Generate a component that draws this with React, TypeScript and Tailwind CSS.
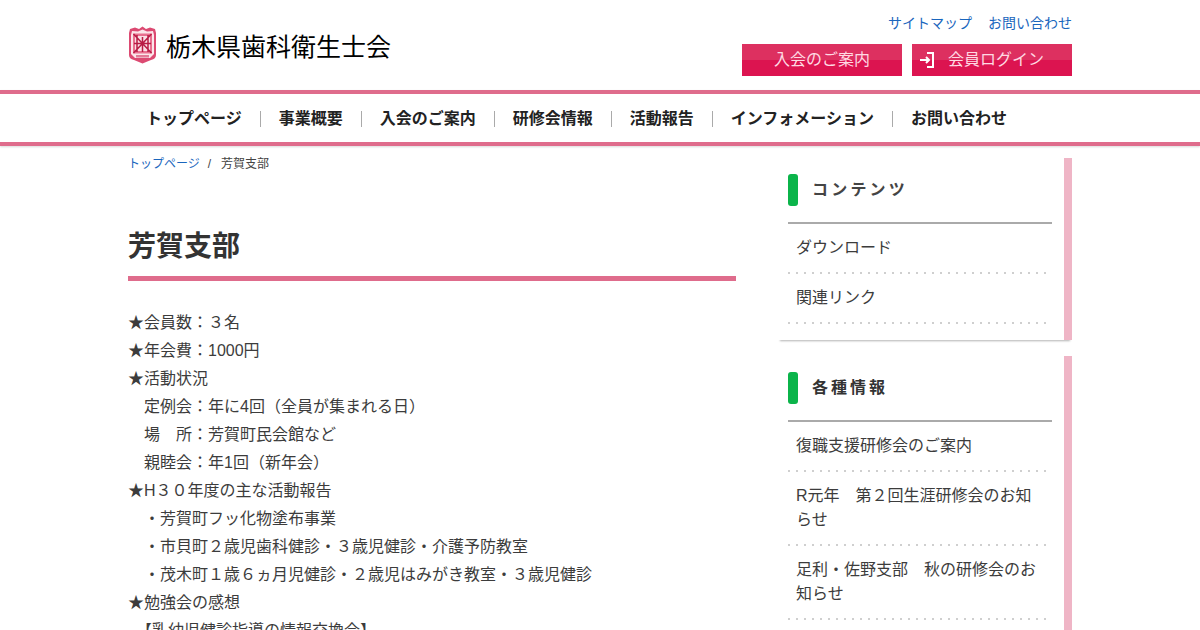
const font = { fontFamily: '"Liberation Sans", "Noto Sans CJK JP", sans-serif' }

const navItems = ['トップページ', '事業概要', '入会のご案内', '研修会情報', '活動報告', 'インフォメーション', 'お問い合わせ']

const bodyLines = [
  '★会員数：３名',
  '★年会費：1000円',
  '★活動状況',
  '　定例会：年に4回（全員が集まれる日）',
  '　場　所：芳賀町民会館など',
  '　親睦会：年1回（新年会）',
  '★H３０年度の主な活動報告',
  '　・芳賀町フッ化物塗布事業',
  '　・市貝町２歳児歯科健診・３歳児健診・介護予防教室',
  '　・茂木町１歳６ヵ月児健診・２歳児はみがき教室・３歳児健診',
  '★勉強会の感想',
  '　【乳幼児健診指導の情報交換会】',
]

const Logo = () => (
  <svg width="29" height="38" viewBox="0 0 29 38">
    <path d="M14.5 0.5 L18 3 L22 1.5 L27 3 L28 7 L28 29 Q28 33 23 34 L14.5 37.5 L6 34 Q1 33 1 29 L1 7 L2 3 L7 1.5 L11 3 Z" fill="#dc4a72" />
    <path d="M14.5 3.5 L19 5.5 L25 5 L26 9 L26 28 L22 32 L7 32 L3 28 L3 9 L4 5 L10 5.5 Z" fill="#fbe6ea" />
    <path d="M5 7.5 L24 7.5 L24 27.5 L5 27.5 Z" fill="#e8708f" />
    <path d="M7 10 L22 10 L22 25 L7 25 Z" fill="#fbdfe6" />
    <path d="M9 9 L9 26 M14.5 11 L14.5 26 M20 9 L20 26 M6 17.5 L23 17.5 M5.5 27 L23.5 8 M5.5 8 L23.5 27" stroke="#b81c45" strokeWidth="1.5" fill="none" />
    <rect x="8" y="29" width="13" height="2.5" fill="#e27b97" />
  </svg>
)

const SideCard = ({ title, items, wide }: { title: string; items: string[]; wide?: boolean }) => (
  <section className="border-r-8 border-[#efb5c6] pt-4 pr-3 pb-4 pl-[10px] shadow-[0_3px_2px_-2px_rgba(0,0,0,0.3)]">
    <div className="flex h-8 items-center gap-[14px]">
      <span className="h-8 w-[10px] rounded-[3px] bg-[#0bb44a]" />
      <h2 className={wide ? 'text-[16px] font-bold tracking-[3px] text-[#333]' : 'text-[16px] font-bold tracking-[3.2px] text-[#444]'}>{title}</h2>
    </div>
    <ul className="mt-4 border-t-2 border-[#aaa]">
      {items.map((item) => (
        <li
          key={item}
          className="bg-[linear-gradient(to_right,#cfcfcf_2px,transparent_2px)] bg-[length:8px_2px] bg-bottom-left bg-repeat-x px-2 pt-3 pb-[14px] text-[16px] leading-6 text-[#3c3c3c]"
        >
          {item}
        </li>
      ))}
    </ul>
  </section>
)

const App = () => {
  return (
    <div className="h-[630px] w-[1200px] overflow-hidden bg-white" style={font}>
      <header className="mx-auto flex h-[90px] w-[944px] justify-between">
        <div className="flex items-center gap-[9px]">
          <Logo />
          <span className="mt-1 text-[25px] leading-none text-black">栃木県歯科衛生士会</span>
        </div>
        <div className="flex flex-col items-end pt-[14px]">
          <div className="flex gap-4 text-[14px] leading-[19px] text-[#1a66bd]">
            <a>サイトマップ</a>
            <a>お問い合わせ</a>
          </div>
          <div className="mt-[11px] flex gap-[10px]">
            <a className="flex h-8 w-40 items-center justify-center bg-[linear-gradient(#dd3060_50%,#dc1450_50%)] text-[16px] text-[#ffd9e3]">入会のご案内</a>
            <a className="flex h-8 w-40 items-center gap-[14px] bg-[linear-gradient(#dd3060_50%,#dc1450_50%)] pl-2 text-[16px] text-[#ffd9e3]">
              <svg width="14" height="16" viewBox="0 0 14 16" fill="none" stroke="#fff" strokeWidth="2">
                <path d="M7 1 H13 V15 H7" />
                <path d="M0 8 H9 M6 5 L9 8 L6 11" />
              </svg>
              <span>会員ログイン</span>
            </a>
          </div>
        </div>
      </header>

      <nav className="h-14 border-y-4 border-[#df6c8c] shadow-[0_1px_2px_rgba(0,0,0,0.15)]">
        <ul className="mx-auto flex h-12 w-[944px] items-center pt-[2px] text-[16px] font-bold text-[#222]">
          {navItems.map((item, i) => (
            <li key={item} className={i === 0 ? 'px-[18px] leading-4' : 'border-l border-[#aaa] px-[18px] leading-4'}>
              {item}
            </li>
          ))}
        </ul>
      </nav>

      <div className="mx-auto flex w-[944px] justify-between">
        <main className="w-[608px]">
          <div className="flex h-[36px] items-center pb-[1px] text-[12px] text-[#444]">
            <a className="text-[#1a66bd]">トップページ</a>
            <span className="mr-[10px] ml-2">/</span>
            <span>芳賀支部</span>
          </div>
          <h1 className="mt-[45px] border-b-[5px] border-[#df6c8c] pb-[9px] text-[28px] leading-[40px] font-bold text-[#333]">芳賀支部</h1>
          <div className="mt-[28px] text-[16px] leading-7 text-[#3c3c3c]">
            {bodyLines.map((line) => (
              <p key={line}>{line}</p>
            ))}
          </div>
        </main>
        <aside className="mt-3 flex w-[294px] flex-col gap-4">
          <SideCard title="コンテンツ" items={['ダウンロード', '関連リンク']} />
          <SideCard
            title="各種情報"
            wide
            items={['復職支援研修会のご案内', 'R元年　第２回生涯研修会のお知らせ', '足利・佐野支部　秋の研修会のお知らせ']}
          />
        </aside>
      </div>
    </div>
  )
}

export default App
